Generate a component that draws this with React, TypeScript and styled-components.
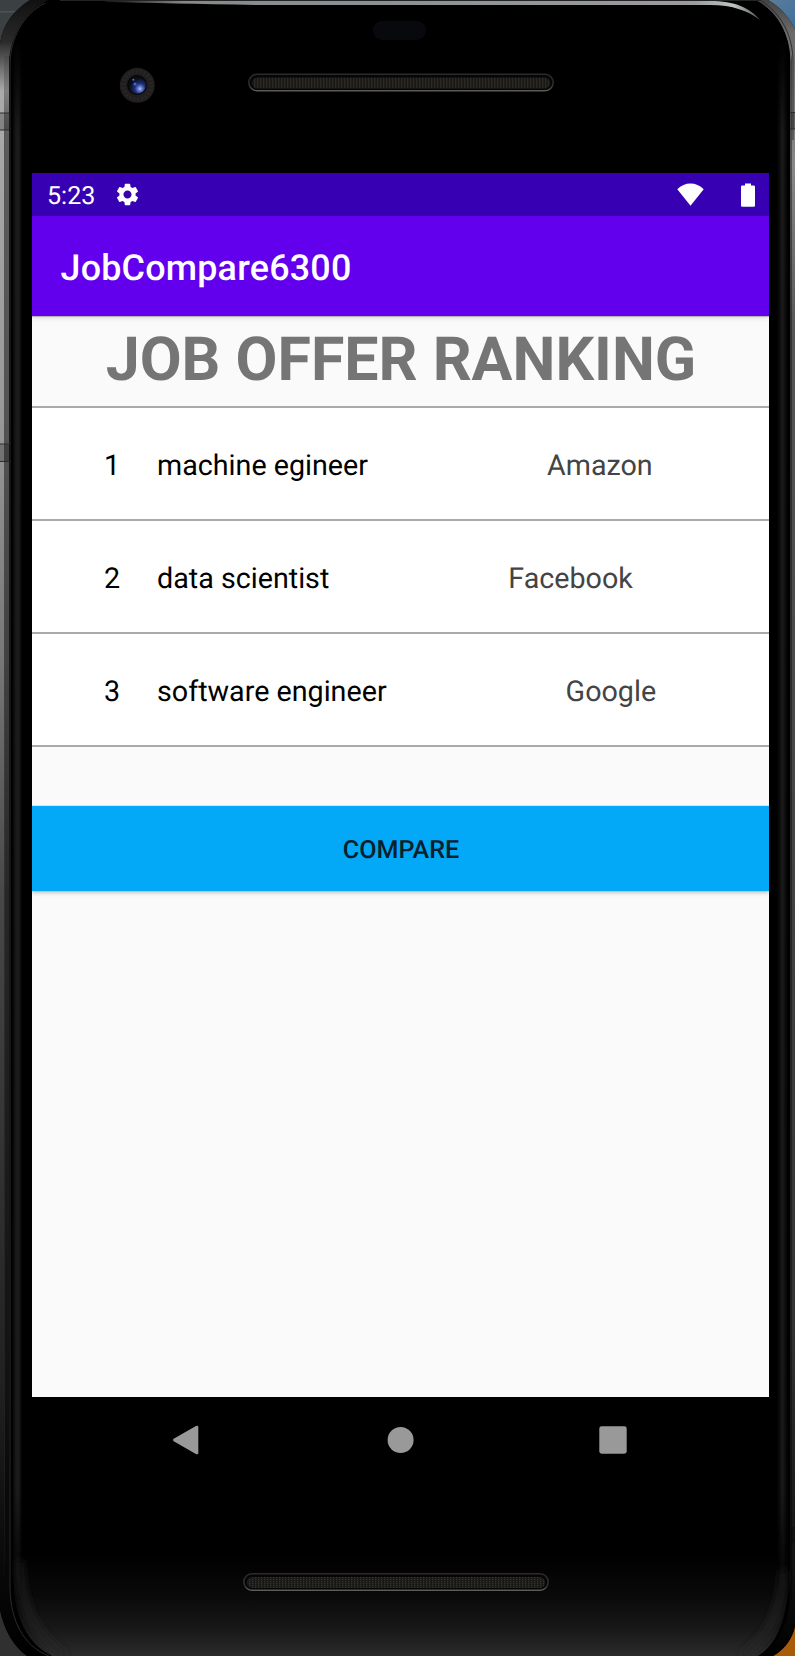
import React from "react";
import styled, { createGlobalStyle } from "styled-components";
import { MdSettings } from "react-icons/md";

const GlobalStyle = createGlobalStyle`
  html, body { margin: 0; padding: 0; background: #000; }
  * { box-sizing: border-box; }
`;

const Device = styled.div`
  position: relative;
  width: 795px;
  height: 1656px;
  padding: 173px 26px 0 32px;
  overflow: hidden;
  display: flex;
  flex-direction: column;
  font-family: Roboto, "Liberation Sans", sans-serif;
  text-rendering: geometricPrecision;
`;

const Casing = styled.svg`
  position: absolute;
  inset: 0;
  width: 795px;
  height: 1656px;
`;

const Screen = styled.main`
  position: relative;
  height: 1224px;
  background: #fafafa;
  display: flex;
  flex-direction: column;
`;

const StatusBar = styled.div`
  height: 43px;
  flex: none;
  display: flex;
  align-items: center;
  padding: 0 14px 0 15px;
  background: #3700b3;
  color: #fff;
`;

const Clock = styled.span`
  font-size: 25.1px;
  line-height: 43px;
  padding-top: 4px;
  width: 67px;
`;

const StatusIcons = styled.div`
  margin-left: auto;
  display: flex;
  gap: 37px;
  align-items: flex-start;
`;

const AppBar = styled.header`
  position: relative;
  height: 100px;
  flex: none;
  display: flex;
  align-items: center;
  padding: 3px 28.5px 0;
  background: #6200ee;
  color: #fff;
  font-size: 35.86px;
  font-weight: 500;
  letter-spacing: 0.22px;
  box-shadow: 0 1px 1px rgba(0, 0, 0, 0.22), 0 2px 6px rgba(0, 0, 0, 0.1);
`;

const Heading = styled.h1`
  margin: 0;
  height: 90px;
  flex: none;
  padding: 8px 0 0 1px;
  text-align: center;
  font-size: 60.85px;
  font-weight: 700;
  line-height: 72px;
  color: #757575;
  white-space: nowrap;
`;

const OfferList = styled.ul`
  margin: 0;
  padding: 0;
  list-style: none;
  border-top: 2px solid #aaa;
`;

const OfferRow = styled.li`
  height: 113px;
  display: flex;
  align-items: center;
  padding: 4px 0 0 72px;
  background: #fff;
  border-bottom: 2px solid #aaa;
  font-size: 28.7px;
  color: #000;
`;

const Rank = styled.span`
  width: 53px;
`;

const Company = styled.span`
  margin-left: 179px;
  color: #444;
`;

const CompareButton = styled.button`
  height: 85px;
  flex: none;
  margin: 59px 0 0;
  padding: 4px 0 0 1px;
  border: 0;
  background: #03a9f7;
  color: #06202d;
  font: 500 25.1px Roboto, "Liberation Sans", sans-serif;
  text-rendering: inherit;
  box-shadow: 0 0 1px rgba(0, 0, 0, 0.4), 0 2px 4px rgba(0, 0, 0, 0.22);
`;

const NavBar = styled.nav`
  position: relative;
  height: 86px;
  display: flex;
  justify-content: space-between;
  align-items: center;
  padding: 0 142px 0 141px;
`;

const offers = [
  { rank: 1, title: "machine egineer", company: "Amazon" },
  { rank: 2, title: "data scientist", company: "Facebook" },
  { rank: 3, title: "software engineer", company: "Google" },
];

function Speaker({ x, y }: { x: number; y: number }) {
  return (
    <g transform={`translate(${x} ${y})`}>
      <rect x="0.75" y="0.75" width="304.5" height="16.5" rx="8.25" fill="#060606" stroke="url(#rim)" strokeWidth="1.5" />
      <rect x="4" y="4" width="298" height="11" rx="5.5" fill="url(#mesh)" />
    </g>
  );
}

function PhoneCasing() {
  return (
    <Casing viewBox="0 0 795 1656" aria-hidden="true">
      <defs>
        <linearGradient id="edge" x1="0" y1="0" x2="0" y2="1656" gradientUnits="userSpaceOnUse">
          <stop offset="0" stopColor="#111" />
          <stop offset="0.025" stopColor="#2a2a2a" />
          <stop offset="0.055" stopColor="#aaa" />
          <stop offset="0.25" stopColor="#999" />
          <stop offset="0.4" stopColor="#777" />
          <stop offset="0.54" stopColor="#484848" />
          <stop offset="0.84" stopColor="#202020" />
          <stop offset="0.95" stopColor="#080808" />
          <stop offset="1" stopColor="#000" />
        </linearGradient>
        <linearGradient id="edgeRight" x1="0" y1="0" x2="0" y2="1656" gradientUnits="userSpaceOnUse">
          <stop offset="0" stopColor="#444" />
          <stop offset="0.02" stopColor="#6a6a6a" />
          <stop offset="0.1" stopColor="#888" />
          <stop offset="0.2" stopColor="#555" />
          <stop offset="0.8" stopColor="#333" />
          <stop offset="0.95" stopColor="#111" />
          <stop offset="1" stopColor="#000" />
        </linearGradient>
        <linearGradient id="sheen" x1="12" x2="22" y1="0" y2="0" gradientUnits="userSpaceOnUse">
          <stop offset="0" stopColor="#000" />
          <stop offset="0.4" stopColor="#1a1a1a" />
          <stop offset="0.7" stopColor="#1a1a1a" />
          <stop offset="1" stopColor="#000" />
        </linearGradient>
        <linearGradient id="sheenRight" x1="777" x2="788" y1="0" y2="0" gradientUnits="userSpaceOnUse">
          <stop offset="0" stopColor="#000" />
          <stop offset="0.5" stopColor="#1a1a1a" />
          <stop offset="1" stopColor="#000" />
        </linearGradient>
        <linearGradient id="fadeSides" x1="0" y1="40" x2="0" y2="1600" gradientUnits="userSpaceOnUse">
          <stop offset="0" stopColor="#000" />
          <stop offset="0.06" stopColor="#fff" />
          <stop offset="0.93" stopColor="#fff" />
          <stop offset="1" stopColor="#000" />
        </linearGradient>
        <mask id="sides" maskUnits="userSpaceOnUse" x="0" y="0" width="795" height="1656">
          <rect width="795" height="1656" fill="url(#fadeSides)" />
        </mask>
        <linearGradient id="topLine" x1="105" x2="760" y1="0" y2="0" gradientUnits="userSpaceOnUse">
          <stop offset="0" stopColor="#111" />
          <stop offset="0.12" stopColor="#85898c" />
          <stop offset="0.9" stopColor="#999ba0" />
          <stop offset="0.96" stopColor="#bcc4c3" />
          <stop offset="1" stopColor="#555" />
        </linearGradient>
        <linearGradient id="floor" x1="0" y1="1555" x2="0" y2="1656" gradientUnits="userSpaceOnUse">
          <stop offset="0" stopColor="#000" />
          <stop offset="0.4" stopColor="#090909" />
          <stop offset="0.75" stopColor="#191919" />
          <stop offset="1" stopColor="#2b2b2b" />
        </linearGradient>
        <linearGradient id="rim" x1="0" y1="0" x2="0" y2="1">
          <stop offset="0" stopColor="#2b2b2b" />
          <stop offset="0.7" stopColor="#303030" />
          <stop offset="1" stopColor="#5c5c58" />
        </linearGradient>
        <pattern id="mesh" width="3" height="2" patternUnits="userSpaceOnUse">
          <rect width="3" height="2" fill="#191816" />
          <rect width="1.3" height="1.2" fill="#37342f" />
        </pattern>
        <linearGradient id="sky" x1="770" y1="0" x2="795" y2="28" gradientUnits="userSpaceOnUse">
          <stop offset="0" stopColor="#5d7b98" />
          <stop offset="1" stopColor="#3d719f" />
        </linearGradient>
        <radialGradient id="lens" cx="0.66" cy="0.7" r="0.62">
          <stop offset="0" stopColor="#b4c2f8" />
          <stop offset="0.22" stopColor="#6377cb" />
          <stop offset="0.5" stopColor="#1d2f76" />
          <stop offset="1" stopColor="#0a0c1b" />
        </radialGradient>
        <filter id="soft" x="-60%" y="-20%" width="220%" height="140%">
          <feGaussianBlur stdDeviation="4" />
        </filter>
      </defs>

      <rect width="60" height="60" fill="#3b4043" />
      <rect y="11" width="30" height="1.5" fill="#55504e" />
      <rect x="750" width="45" height="60" fill="url(#sky)" />
      <rect y="1580" width="60" height="76" fill="#303030" />
      <rect x="750" y="1580" width="45" height="76" fill="#a85c0a" />

      <path d="M30 0C14 10 2 25 0 44V1610C4 1630 14 1647 27 1656H773C784 1649 792 1640 795 1627V29C789 17 780 7 768 0Z" fill="#000" />
      <path d="M30 0C14 10 2 25 0 44V1610C4 1630 14 1647 27 1656H50C25 1648 10 1620 9 1590V62C11 34 25 12 48 0Z" fill="url(#edge)" />
      <rect x="4" y="56" width="1" height="1520" fill="#222" opacity="0.6" mask="url(#sides)" />
      <rect x="5" y="56" width="5" height="1520" fill="#000" opacity="0.45" mask="url(#sides)" />
      <path d="M768 0C780 7 789 17 795 29V1620C795 1636 785 1650 773 1656H760C780 1645 792 1620 792 1590V62C790 34 777 11 757 0Z" fill="url(#edgeRight)" />
      <path d="M757 0C779 12 791 34 791 62V1590C791 1620 780 1645 760 1656" fill="none" stroke="url(#edgeRight)" strokeWidth="1.2" />
      <path d="M760 0C781 13 793 35 793 62V140" fill="none" stroke="#222" strokeWidth="0.8" />
      <path d="M45 3C22 15 11 39 10 62V1590C11 1620 23 1646 49 1656" fill="none" stroke="#2c2c2c" strokeWidth="1" />

      <path d="M14 1555V1592C17 1618 27 1644 52 1656H758C777 1644 786 1620 788 1588V1555Z" fill="url(#floor)" />
      <g filter="url(#soft)" fill="none" stroke="#262626" strokeWidth="5">
        <path d="M19 1560C21 1604 34 1634 65 1656" />
        <path d="M784 1570C781 1612 768 1638 742 1656" />
      </g>
      <g mask="url(#sides)">
        <rect x="12" y="40" width="10" height="1560" fill="url(#sheen)" />
        <rect x="777" y="40" width="11" height="1560" fill="url(#sheenRight)" />
      </g>

      <g fill="#000" opacity="0.22">
        <rect y="113" width="9" height="17" />
        <rect y="444" width="10" height="17" />
        <rect x="791" y="112" width="4" height="17" />
        <rect x="791" y="1527" width="4" height="16" />
      </g>
      <g fill="#2c2c2c">
        <rect y="112.5" width="9" height="1" />
        <rect y="129.5" width="9" height="1" />
        <rect y="443.5" width="10" height="1" />
        <rect y="461" width="10" height="1" />
        <rect x="790" y="112" width="5" height="1" />
        <rect x="790" y="128.5" width="5" height="1" />
      </g>

      <rect x="60" y="0" width="700" height="1" fill="#242424" />
      <path d="M105 1H710C735 1 750 8 760 20C748 11 733 5 710 5H260C200 4 150 3 105 2Z" fill="url(#topLine)" />

      <circle cx="137.3" cy="85.3" r="17.5" fill="#201e1f" />
      <circle cx="137.3" cy="85.3" r="14" fill="none" stroke="#292627" strokeWidth="4" strokeDasharray="2 2" />
      <circle cx="137" cy="85" r="10" fill="#080809" />
      <circle cx="137.3" cy="85.3" r="8.5" fill="url(#lens)" />
      <circle cx="135" cy="84" r="1.6" fill="#4265c8" />
      <circle cx="133.4" cy="79.8" r="1" fill="#5e75c0" />
      <rect x="373" y="21" width="53" height="19" rx="9.5" fill="#08090d" />
      <Speaker x={248} y={73.5} />
      <Speaker x={243} y={1573} />
    </Casing>
  );
}

export default function App() {
  return (
    <Device>
      <GlobalStyle />
      <PhoneCasing />
      <Screen>
        <StatusBar>
          <Clock>5:23</Clock>
          <MdSettings size={27} />
          <StatusIcons>
            <svg width="27" height="24" viewBox="0 0 27 24" fill="#fff">
              <path d="M0.3 6.3C7.6-1.3 19.4-1.3 26.7 6.3L13.5 22.8Z" />
            </svg>
            <svg width="14" height="24" viewBox="0 0 14 24" fill="#fff">
              <path d="M4 0.4H10V2.4H12.7Q14 2.4 14 3.7V22.4Q14 23.7 12.7 23.7H1.3Q0 23.7 0 22.4V3.7Q0 2.4 1.3 2.4H4Z" />
            </svg>
          </StatusIcons>
        </StatusBar>
        <AppBar>JobCompare6300</AppBar>
        <Heading>JOB OFFER RANKING</Heading>
        <OfferList>
          {offers.map((offer) => (
            <OfferRow key={offer.rank}>
              <Rank>{offer.rank}</Rank>
              <span>{offer.title}</span>
              <Company>{offer.company}</Company>
            </OfferRow>
          ))}
        </OfferList>
        <CompareButton>COMPARE</CompareButton>
      </Screen>
      <NavBar>
        <svg width="27" height="30" viewBox="0 0 27 30" fill="#999">
          <path d="M0.7 13.8L22.9 1Q25.3 0 25.3 2V28Q25.3 30 22.9 29L0.7 16.2Q-0.7 15 0.7 13.8Z" />
        </svg>
        <svg width="28" height="26" viewBox="0 0 28 26" fill="#999">
          <circle cx="14.6" cy="13" r="13" />
        </svg>
        <svg width="28" height="28" viewBox="0 0 28 28" fill="#999">
          <rect x="0.3" y="0.3" width="27.4" height="27.4" rx="2.4" />
        </svg>
      </NavBar>
    </Device>
  );
}
